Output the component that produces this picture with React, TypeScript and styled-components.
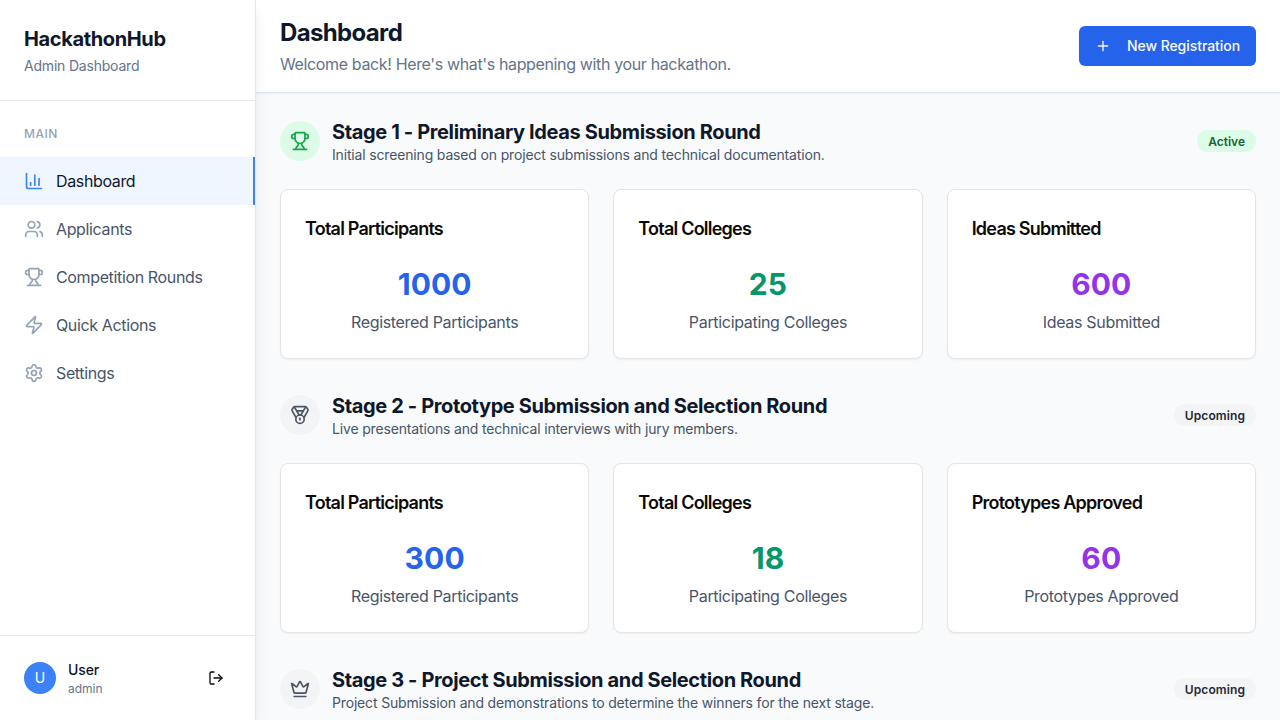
import React from "react";
import styled, { createGlobalStyle } from "styled-components";
import { ChartColumn, Users, Trophy, Zap, Settings, LogOut, Plus, Medal, Crown } from "lucide-react";

const GlobalStyle = createGlobalStyle`
  *, *::before, *::after { box-sizing: border-box; }
  body {
    margin: 0;
    font-family: Inter, "Liberation Sans", sans-serif;
    font-size: 16px;
    line-height: 24px;
    letter-spacing: -0.36px;
    color: #0c0a09;
    background: #f8fafc;
    -webkit-font-smoothing: antialiased;
  }
  h1, h2, h3, p { margin: 0; }
  button { font: inherit; border: 0; cursor: pointer; }
`;

const Shell = styled.div`
  display: flex;
  height: 100vh;
  overflow: hidden;
`;

const Sidebar = styled.aside`
  position: relative;
  z-index: 1;
  display: flex;
  flex-direction: column;
  flex: none;
  width: 256px;
  background: #fff;
  border-right: 1px solid #e2e8f0;
  box-shadow: 0 10px 15px -3px rgba(0, 0, 0, 0.1), 0 4px 6px -4px rgba(0, 0, 0, 0.1);
`;

const Brand = styled.div`
  padding: 25px 24px 24px;
  border-bottom: 1px solid #e2e8f0;
`;

const BrandName = styled.h1`
  font-size: 20px;
  line-height: 28px;
  font-weight: 700;
  letter-spacing: -0.37px;
  color: #0f172a;
`;

const BrandNote = styled.p`
  margin-top: 3px;
  font-size: 14px;
  line-height: 20px;
  letter-spacing: -0.2px;
  color: #64748b;
`;

const Nav = styled.nav`
  flex: 1;
  padding-top: 25px;
`;

const NavHeading = styled.p`
  padding: 0 24px;
  margin-bottom: 15px;
  font-size: 12px;
  line-height: 16px;
  font-weight: 500;
  letter-spacing: 0.5px;
  color: #94a3b8;
`;

const NavItem = styled.a<{ $active?: boolean }>`
  display: flex;
  align-items: center;
  gap: 12px;
  height: 48px;
  padding: 0 24px;
  color: ${(p) => (p.$active ? "#0f172a" : "#475569")};
  background: ${(p) => (p.$active ? "#eff6ff" : "transparent")};
  border-right: ${(p) => (p.$active ? "2px solid #3b82f6" : "0")};
  svg { color: ${(p) => (p.$active ? "#3b82f6" : "#94a3b8")}; }
`;

const Account = styled.div`
  display: flex;
  align-items: center;
  gap: 12px;
  height: 85px;
  padding: 0 23px 0 24px;
  border-top: 1px solid #e2e8f0;
`;

const Avatar = styled.div`
  display: grid;
  place-items: center;
  width: 32px;
  height: 32px;
  border-radius: 50%;
  background: #3b82f6;
  color: #fff;
  font-size: 14px;
  font-weight: 400;
  letter-spacing: 0;
`;

const AccountText = styled.div`
  flex: 1;
`;

const AccountName = styled.p`
  font-size: 14px;
  line-height: 20px;
  font-weight: 500;
  letter-spacing: -0.1px;
  color: #0f172a;
`;

const AccountRole = styled.p`
  padding-top: 1px;
  margin-bottom: -1px;
  font-size: 12px;
  line-height: 16px;
  letter-spacing: 0;
  color: #64748b;
`;

const LogoutButton = styled.button`
  display: grid;
  place-items: center;
  width: 32px;
  height: 32px;
  padding: 0;
  background: none;
  color: #0c0a09;
`;

const Main = styled.main`
  flex: 1;
  min-width: 0;
`;

const TopBar = styled.header`
  display: flex;
  align-items: center;
  justify-content: space-between;
  height: 93px;
  padding: 0 24px;
  background: #fff;
  border-bottom: 1px solid #e2e8f0;
  box-shadow: 0 1px 2px rgba(0, 0, 0, 0.05);
`;

const PageTitle = styled.h2`
  padding-top: 1px;
  font-size: 24px;
  line-height: 32px;
  font-weight: 700;
  letter-spacing: -0.65px;
  color: #0f172a;
`;

const PageNote = styled.p`
  margin-top: 3px;
  color: #64748b;
`;

const PrimaryButton = styled.button`
  display: flex;
  align-items: center;
  gap: 16px;
  height: 40px;
  padding: 0 16px;
  border-radius: 6px;
  background: #2563eb;
  color: #f8fafc;
  font-size: 14px;
  font-weight: 500;
  letter-spacing: -0.06px;
`;

const Content = styled.div`
  display: flex;
  flex-direction: column;
  gap: 32px;
  padding: 24px;
`;

const StageHeader = styled.div`
  display: flex;
  align-items: center;
  gap: 12px;
  height: 48px;
  margin-bottom: 24px;
`;

const StageIcon = styled.div<{ $active?: boolean }>`
  display: grid;
  place-items: center;
  width: 40px;
  height: 40px;
  border-radius: 50%;
  background: ${(p) => (p.$active ? "#dcfce7" : "#f3f4f6")};
  color: ${(p) => (p.$active ? "#16a34a" : "#4b5563")};
`;

const StageText = styled.div`
  flex: 1;
`;

const StageTitle = styled.h3`
  padding-top: 1px;
  margin-bottom: -1px;
  font-size: 20px;
  line-height: 28px;
  font-weight: 700;
  letter-spacing: -0.37px;
  color: #0f172a;
`;

const StageNote = styled.p`
  font-size: 14px;
  line-height: 20px;
  letter-spacing: -0.162px;
  color: #475569;
`;

const Badge = styled.span<{ $active?: boolean }>`
  padding: 4px 11px 2px;
  border-radius: 999px;
  font-size: 12px;
  line-height: 16px;
  font-weight: 600;
  letter-spacing: ${(p) => (p.$active ? "0" : "0.09px")};
  background: ${(p) => (p.$active ? "#dcfce7" : "#f3f4f6")};
  color: ${(p) => (p.$active ? "#166534" : "#1f2937")};
`;

const CardGrid = styled.div`
  display: grid;
  grid-template-columns: repeat(3, 1fr);
  gap: 24px;
`;

const Card = styled.div`
  padding: 25px 24px 24px;
  background: #fff;
  border: 1px solid #e7e5e4;
  border-radius: 8px;
  box-shadow: 0 1px 2px rgba(0, 0, 0, 0.05);
`;

const CardTitle = styled.h3`
  font-size: 18px;
  line-height: 28px;
  font-weight: 600;
  letter-spacing: -0.77px;
`;

const CardValue = styled.p<{ $color: string }>`
  margin-top: 23px;
  font-size: 30px;
  line-height: 36px;
  font-weight: 700;
  letter-spacing: 0.1px;
  text-align: center;
  color: ${(p) => p.$color};
`;

const CardLabel = styled.p`
  margin-top: 8px;
  letter-spacing: -0.32px;
  text-align: center;
  color: #475569;
`;

const navItems = [
  { label: "Dashboard", Icon: ChartColumn, active: true },
  { label: "Applicants", Icon: Users },
  { label: "Competition Rounds", Icon: Trophy },
  { label: "Quick Actions", Icon: Zap },
  { label: "Settings", Icon: Settings },
];

const colors = ["#2563eb", "#059669", "#9333ea"];

const stages = [
  {
    title: "Stage 1 - Preliminary Ideas Submission Round",
    note: "Initial screening based on project submissions and technical documentation.",
    Icon: Trophy,
    active: true,
    cards: [
      ["Total Participants", "1000", "Registered Participants"],
      ["Total Colleges", "25", "Participating Colleges"],
      ["Ideas Submitted", "600", "Ideas Submitted"],
    ],
  },
  {
    title: "Stage 2 - Prototype Submission and Selection Round",
    note: "Live presentations and technical interviews with jury members.",
    Icon: Medal,
    active: false,
    cards: [
      ["Total Participants", "300", "Registered Participants"],
      ["Total Colleges", "18", "Participating Colleges"],
      ["Prototypes Approved", "60", "Prototypes Approved"],
    ],
  },
  {
    title: "Stage 3 - Project Submission and Selection Round",
    note: "Project Submission and demonstrations to determine the winners for the next stage.",
    Icon: Crown,
    active: false,
    cards: [],
  },
];

export default function App() {
  return (
    <>
      <GlobalStyle />
      <Shell>
        <Sidebar>
          <Brand>
            <BrandName>HackathonHub</BrandName>
            <BrandNote>Admin Dashboard</BrandNote>
          </Brand>
          <Nav>
            <NavHeading>MAIN</NavHeading>
            {navItems.map(({ label, Icon, active }) => (
              <NavItem key={label} $active={active}>
                <Icon size={20} />
                {label}
              </NavItem>
            ))}
          </Nav>
          <Account>
            <Avatar>U</Avatar>
            <AccountText>
              <AccountName>User</AccountName>
              <AccountRole>admin</AccountRole>
            </AccountText>
            <LogoutButton aria-label="Log out">
              <LogOut size={16} />
            </LogoutButton>
          </Account>
        </Sidebar>
        <Main>
          <TopBar>
            <div>
              <PageTitle>Dashboard</PageTitle>
              <PageNote>Welcome back! Here's what's happening with your hackathon.</PageNote>
            </div>
            <PrimaryButton>
              <Plus size={16} />
              New Registration
            </PrimaryButton>
          </TopBar>
          <Content>
            {stages.map(({ title, note, Icon, active, cards }) => (
              <section key={title}>
                <StageHeader>
                  <StageIcon $active={active}>
                    <Icon size={20} />
                  </StageIcon>
                  <StageText>
                    <StageTitle>{title}</StageTitle>
                    <StageNote>{note}</StageNote>
                  </StageText>
                  <Badge $active={active}>{active ? "Active" : "Upcoming"}</Badge>
                </StageHeader>
                <CardGrid>
                  {cards.map(([heading, value, label], i) => (
                    <Card key={heading}>
                      <CardTitle>{heading}</CardTitle>
                      <CardValue $color={colors[i]}>{value}</CardValue>
                      <CardLabel>{label}</CardLabel>
                    </Card>
                  ))}
                </CardGrid>
              </section>
            ))}
          </Content>
        </Main>
      </Shell>
    </>
  );
}
